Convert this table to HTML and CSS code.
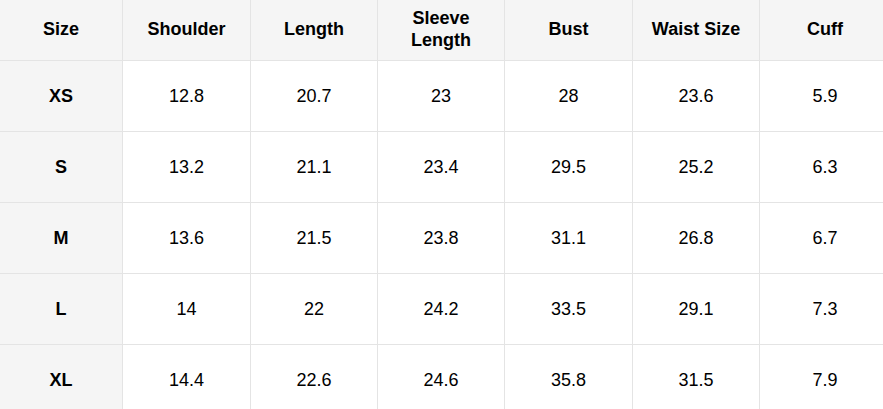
FILE: index.html
```html
<!DOCTYPE html>
<html>
<head>
<meta charset="utf-8">
<link rel="stylesheet" href="styles.css">
</head>
<body>
<div class="size-table">
  <div class="cell head first">Size</div>
  <div class="cell head">Shoulder</div>
  <div class="cell head">Length</div>
  <div class="cell head">Sleeve<br>Length</div>
  <div class="cell head">Bust</div>
  <div class="cell head">Waist Size</div>
  <div class="cell head">Cuff</div>

  <div class="cell first">XS</div>
  <div class="cell">12.8</div><div class="cell">20.7</div><div class="cell">23</div><div class="cell">28</div><div class="cell">23.6</div><div class="cell">5.9</div>

  <div class="cell first">S</div>
  <div class="cell">13.2</div><div class="cell">21.1</div><div class="cell">23.4</div><div class="cell">29.5</div><div class="cell">25.2</div><div class="cell">6.3</div>

  <div class="cell first">M</div>
  <div class="cell">13.6</div><div class="cell">21.5</div><div class="cell">23.8</div><div class="cell">31.1</div><div class="cell">26.8</div><div class="cell">6.7</div>

  <div class="cell first">L</div>
  <div class="cell">14</div><div class="cell">22</div><div class="cell">24.2</div><div class="cell">33.5</div><div class="cell">29.1</div><div class="cell">7.3</div>

  <div class="cell first">XL</div>
  <div class="cell">14.4</div><div class="cell">22.6</div><div class="cell">24.6</div><div class="cell">35.8</div><div class="cell">31.5</div><div class="cell">7.9</div>
</div>
</body>
</html>
```

FILE: styles.css
```css
html, body {
  margin: 0;
  padding: 0;
  background: #ffffff;
  overflow: hidden;
}
.size-table {
  display: grid;
  grid-template-columns: 122px 127px 126px 126px 127px 126px 130px;
  grid-template-rows: 60px repeat(5, 70px);
  gap: 1px;
  background: #e4e4e4;
  width: 891px;
  font-family: "Liberation Sans", Arial, sans-serif;
  font-size: 18px;
  color: #000000;
}
.cell {
  background: #ffffff;
  display: flex;
  align-items: center;
  justify-content: center;
  text-align: center;
  line-height: 22px;
}
.head {
  background: #f5f5f5;
  font-weight: bold;
  padding-bottom: 2px;
}
.first {
  background: #f5f5f5;
  font-weight: bold;
}
```
